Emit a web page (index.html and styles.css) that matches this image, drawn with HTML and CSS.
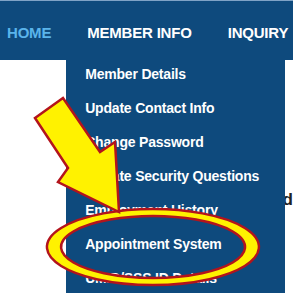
FILE: index.html
```html
<!doctype html>
<html lang="en">
    <head>
        <meta charset="UTF-8" />
        <meta name="viewport" content="width=device-width, initial-scale=1.0" />
        <title>Member Portal</title>
        <link rel="stylesheet" href="styles.css">
    </head>
    <body>
        <header class="topbar">
            <nav class="nav">
                <a class="nav-link active" href="#">HOME</a>
                <div class="nav-item">
                    <a class="nav-link" href="#">MEMBER INFO</a>
                    <ul class="submenu">
                        <li><a href="#">Member Details</a></li>
                        <li><a href="#">Update Contact Info</a></li>
                        <li><a href="#">Change Password</a></li>
                        <li><a href="#">Update Security Questions</a></li>
                        <li><a href="#">Employment History</a></li>
                        <li><a href="#">Appointment System</a></li>
                        <li><a href="#">UMID/SSS ID Details</a></li>
                    </ul>
                </div>
                <a class="nav-link" href="#">INQUIRY</a>
            </nav>
        </header>
        <main class="content">
            <h2>Dashboard</h2>
        </main>

        <!-- annotation drawn over the page -->
        <svg class="callout" width="293" height="300" viewBox="0 0 293 300">
            <path
                d="M153 209 A106 38 0 1 1 152.9 209 Z M153 216 A92 31 0 1 0 153.1 216 Z"
                fill="#fff200"
                fill-rule="evenodd"
                stroke="#b3141c"
                stroke-width="2.5"
            />
            <polygon
                points="35,118 63,98 100,152 115,142 119,212 58,182 68,168"
                fill="#fff200"
                stroke="#b3141c"
                stroke-width="2.5"
            />
        </svg>
    </body>
</html>
```

FILE: styles.css
```css
html,
body {
    height: 100%;
}
body {
    font-family: "Liberation Sans", Arial, sans-serif;
    background: #fff;
    color: #222;
    margin: 0;
    padding: 0;
    position: relative;
}
.topbar {
    background-color: #0e4a7d;
    border-top: 1px solid #7fa3c6;
    height: 59px;
}
.nav {
    display: flex;
    align-items: center;
    gap: 36px;
    height: 100%;
    padding-left: 7px;
}
.nav-item {
    position: relative;
}
.nav-link {
    color: #fff;
    font-size: 15px;
    font-weight: bold;
    letter-spacing: -0.2px;
    text-decoration: none;
    white-space: nowrap;
    position: relative;
    top: 2px;
}
.nav-link.active {
    color: #5ab4eb;
}
.submenu {
    position: absolute;
    top: 38px;
    left: -21px;
    width: 219px;
    margin: 0;
    padding: 0;
    list-style: none;
    background-color: #0e4a7d;
    z-index: 2;
}
.submenu a {
    display: block;
    padding: 6px 19px 12px;
    line-height: 16px;
    color: #fff;
    font-size: 14px;
    font-weight: bold;
    letter-spacing: -0.2px;
    text-decoration: none;
    white-space: nowrap;
}
.submenu li:last-child a {
    padding-bottom: 7px;
}
.content {
    display: flex;
    justify-content: flex-end;
    padding-top: 130px;
}
.content h2 {
    margin: 0;
    font-size: 17px;
    font-weight: bold;
    color: #222;
    white-space: nowrap;
}
.callout {
    position: absolute;
    top: 0;
    left: 0;
    z-index: 5;
}
```
